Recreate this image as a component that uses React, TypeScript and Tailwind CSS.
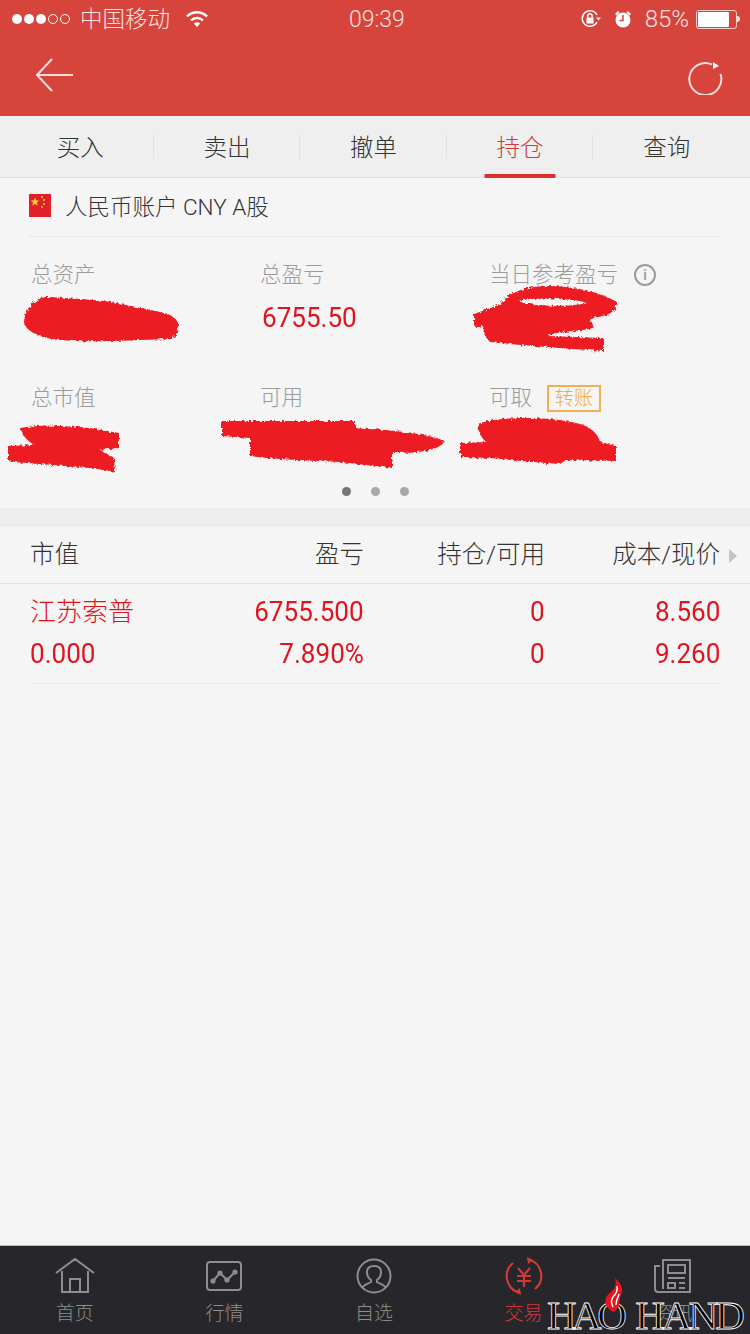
const cjk = "font-['Roboto','Noto_Sans_CJK_SC',sans-serif]";

const tabs = ["买入", "卖出", "撤单", "持仓", "查询"];

function StatusBar() {
  return (
    <div className="relative flex h-[38px] items-center pl-3 pr-[10px] text-[23px] font-light text-[#f8e3e1]">
      <div className="flex items-center gap-[2px]">
        {[0, 1, 2].map((i) => (
          <span key={i} className="size-[10px] rounded-full bg-white" />
        ))}
        {[0, 1].map((i) => (
          <span key={i} className="size-[10px] rounded-full border border-white" />
        ))}
      </div>
      <span className="ml-[10px] text-[22.500px] leading-none">中国移动</span>
      <svg className="ml-[15px]" width="24" height="18" viewBox="0 0 24 18" fill="none" stroke="#fff" strokeWidth="2.4">
        <path d="M2 6.500a14 14 0 0 1 20 0" />
        <path d="M6 10.500a8.500 8.500 0 0 1 12 0" />
        <path d="M12 17l-3.200-3.400a4.600 4.600 0 0 1 6.400 0z" fill="#fff" stroke="none" />
      </svg>
      <span className="absolute left-[349px] leading-none">09:39</span>
      <div className="ml-auto flex items-center">
        <svg width="20" height="20" viewBox="0 0 20 20" fill="none" stroke="#fff" strokeWidth="1.500">
          <path d="M16 13A7.800 7.800 0 1 1 16 6" />
          <rect x="5.500" y="8.500" width="7" height="6" fill="#fff" stroke="none" />
          <path d="M6.800 8.500V7a2.200 2.200 0 0 1 4.400 0v1.500" />
          <path d="M15 8.500h5l-2.500 3z" fill="#fff" stroke="none" />
        </svg>
        <svg className="ml-[12px]" width="20" height="20" viewBox="0 0 20 20" fill="#fff">
          <circle cx="10" cy="11" r="7.500" />
          <path d="M2 5l3-3 1.500 1.500-3 3zM18 5l-3-3-1.500 1.500 3 3z" />
          <path d="M10 6v5.500H6.500" stroke="#d6443c" strokeWidth="1.500" fill="none" />
        </svg>
        <span className="ml-[12px] text-[24px] leading-none">85%</span>
        <div className="ml-[7px] flex items-center">
          <div className="h-[19px] w-[41px] rounded-[3px] border border-[#f6cfcb] p-[1px]">
            <div className="h-full w-[85%] rounded-[1px] bg-white" />
          </div>
          <span className="h-[6px] w-[3px] rounded-r-sm bg-[#f6dedb]" />
        </div>
      </div>
    </div>
  );
}

function Stat({ label, children }: { label: string; children?: React.ReactNode }) {
  return (
    <div className="h-[123px] pt-[26px]">
      <div className="flex h-[24px] items-center text-[21.500px] font-light leading-none text-[#9b9b9b]">
        {label}
        {children}
      </div>
    </div>
  );
}

function Num({ value, className }: { value: string; className: string }) {
  return (
    <span className={`${className} text-right`}>
      <span className="inline-block origin-right scale-x-[.93] text-[28px]">{value}</span>
    </span>
  );
}

function NavItem({ label, active, children }: { label: string; active?: boolean; children: React.ReactNode }) {
  return (
    <div className={`flex flex-1 flex-col items-center pt-[10px] ${active ? "text-[#cf3a38]" : "text-[#8e8e8e]"}`}>
      <div className="flex h-[40px] items-center">{children}</div>
      <span className="mt-[6px] text-[19px] font-light leading-[24px]">{label}</span>
    </div>
  );
}

export default function App() {
  return (
    <div className={`relative flex h-[1334px] w-[750px] flex-col overflow-hidden bg-[#f5f5f5] ${cjk}`}>
      <header className="h-[116px] shrink-0 bg-[#d6443c]">
        <StatusBar />
        <div className="flex items-start justify-between pl-[35px] pr-[27px] pt-[19px]">
          <svg width="38" height="36" viewBox="0 0 38 36" fill="none" stroke="#f6dedb" strokeWidth="2">
            <path d="M17 2L2 18l15 16M2 18h36" />
          </svg>
          <svg width="36" height="38" viewBox="0 0 36 38" fill="none" stroke="#f6dedb" strokeWidth="2">
            <path d="M25 7.500A16 16 0 1 0 33.500 17" />
            <path d="M26 5l6 4-6 3z" fill="#fff" stroke="none" />
          </svg>
        </div>
      </header>

      <nav className="flex h-[62px] shrink-0 border-b border-[#e2e2e2] bg-[#efefef] pl-[7px] pr-[10px]">
        {tabs.map((tab, i) => (
          <div key={tab} className="relative flex flex-1 items-center justify-center">
            <span className={`pt-[5px] text-[23.500px] font-light ${i === 3 ? "text-[#cf3a38]" : "text-[#333]"}`}>{tab}</span>
            {i < 4 && <span className="absolute right-0 top-[19px] h-[24px] w-px bg-[#e2e2e2]" />}
            {i === 3 && <span className="absolute bottom-[-1px] left-1/2 h-[4px] w-[71px] -translate-x-1/2 bg-[#d8322f]" />}
          </div>
        ))}
      </nav>

      <div className="mx-[29px] flex h-[59px] shrink-0 items-center border-b border-[#e8e8e8]">
        <svg width="22" height="23" viewBox="0 0 22 23" className="mb-[4px]">
          <rect width="22" height="23" fill="#e2202a" />
          <path d="M6 3.500l1.200 3h3l-2.400 2 1 3.200L6 9.800l-2.800 1.900 1-3.200L1.800 6.500h3z" fill="#f8d62c" />
          <circle cx="13" cy="3" r="1" fill="#f8d62c" />
          <circle cx="15" cy="6" r="1" fill="#f8d62c" />
          <circle cx="15" cy="10" r="1" fill="#f8d62c" />
          <circle cx="13" cy="13" r="1" fill="#f8d62c" />
        </svg>
        <span className="ml-[14px] pt-[1px] text-[22.500px] font-light text-[#333]">人民币账户 CNY A股</span>
      </div>

      <section className="relative h-[271px] shrink-0">
        <div className="grid grid-cols-[229px_229px_1fr] pl-[31px]">
          <Stat label="总资产" />
          <Stat label="总盈亏" />
          <Stat label="当日参考盈亏">
            <span className="ml-[16px] flex size-[22px] items-center justify-center rounded-full border-2 border-[#9b9b9b] text-[14px] font-medium">i</span>
          </Stat>
          <Stat label="总市值" />
          <Stat label="可用" />
          <Stat label="可取">
            <span className="ml-[15px] flex h-[27px] w-[54px] items-center justify-center border-2 border-[#f0b04e] text-[19px] font-light text-[#eeaa45]">转账</span>
          </Stat>
        </div>
        <span className="absolute left-[262px] top-[64px] origin-left scale-x-[.93] text-[28px] leading-[34px] text-[#e0141e]">6755.50</span>
        <div className="absolute left-[342px] top-[250px] flex gap-[20px]">
          <span className="size-[9px] rounded-full bg-[#757575]" />
          <span className="size-[9px] rounded-full bg-[#a8a8a8]" />
          <span className="size-[9px] rounded-full bg-[#a8a8a8]" />
        </div>
      </section>

      <div className="h-[19px] shrink-0 bg-[#eeeeee]" />

      <div className="relative flex h-[57px] shrink-0 items-center border-b border-[#e2e2e2] px-[30px] pt-[1px] text-[24.500px] font-light text-[#333]">
        <span className="w-[120px]">市值</span>
        <span className="w-[214px] text-right">盈亏</span>
        <span className="w-[181px] text-right">持仓/可用</span>
        <span className="w-[175px] text-right">成本/现价</span>
        <svg className="absolute right-[13px]" width="8" height="14" viewBox="0 0 8 14"><path d="M0 0l8 7-8 7z" fill="#c4c4c4" /></svg>
      </div>

      <div className="mx-[30px] h-[100px] shrink-0 border-b border-[#e8e8e8] pt-[7px] text-[26px] leading-[42px] text-[#e0141e]">
        <div className="flex">
          <span className="w-[120px] font-light">江苏索普</span>
          <Num value="6755.500" className="w-[214px]" />
          <Num value="0" className="w-[181px]" />
          <Num value="8.560" className="w-[175px]" />
        </div>
        <div className="flex">
          <span className="w-[120px]"><span className="inline-block origin-left scale-x-[.93] text-[28px]">0.000</span></span>
          <Num value="7.890%" className="w-[214px]" />
          <Num value="0" className="w-[181px]" />
          <Num value="9.260" className="w-[175px]" />
        </div>
      </div>

      <div className="flex-1" />

      <footer className="flex h-[89px] shrink-0 border-t border-[#bdbdbd] bg-[#26262b] pr-[2px]">
        <NavItem label="首页">
          <svg width="40" height="36" viewBox="0 0 40 36" fill="none" stroke="currentColor" strokeWidth="2">
            <path d="M1 15L20 1l19 14M7 13v21h26V13M15 34V21h10v13" />
          </svg>
        </NavItem>
        <NavItem label="行情">
          <svg width="36" height="30" viewBox="0 0 36 30" fill="none" stroke="currentColor" strokeWidth="2">
            <rect x="1" y="1" width="34" height="28" rx="3" />
            <path d="M7 20l7-8 7 7 8-8" />
            <circle cx="7" cy="20" r="1.600" fill="currentColor" /><circle cx="14" cy="12" r="1.600" fill="currentColor" /><circle cx="21" cy="19" r="1.600" fill="currentColor" /><circle cx="29" cy="11" r="1.600" fill="currentColor" />
          </svg>
        </NavItem>
        <NavItem label="自选">
          <svg width="36" height="36" viewBox="0 0 36 36" fill="none" stroke="currentColor" strokeWidth="2">
            <circle cx="18" cy="18" r="16.500" />
            <path d="M6 30c2-4 6-4 9-6v-2c-3-2-4-5-4-8 0-4 3-6 7-6s7 2 7 6c0 3-1 6-4 8v2c3 2 7 2 9 6" />
          </svg>
        </NavItem>
        <NavItem label="交易" active>
          <svg width="38" height="38" viewBox="0 0 38 38" fill="none" stroke="currentColor" strokeWidth="2.200">
            <path d="M24 2.500A17 17 0 0 1 30 32M14 35.500A17 17 0 0 1 8 6" />
            <path d="M22 0l6 3-5 4zM16 38l-6-3 5-4z" fill="currentColor" stroke="none" />
            <path d="M13 11l6 7 6-7M12 19h14M12 24h14M19 18v12" />
          </svg>
        </NavItem>
        <NavItem label="资讯">
          <svg width="38" height="34" viewBox="0 0 38 34" fill="none" stroke="currentColor" strokeWidth="2">
            <path d="M6 7H1v23c0 2 1 3 3 3h32V1H9v29" />
            <path d="M14 6h17v8H14zM14 19h17M14 24h7v5h-7zM25 24h6M25 29h6" />
          </svg>
        </NavItem>
      </footer>

      {/* red marker scribbles over the account figures, page coordinates */}
      <svg className="pointer-events-none absolute left-0 top-0" width="750" height="510" viewBox="0 0 750 510">
        <defs>
          <filter id="rough" x="-5%" y="-10%" width="110%" height="120%">
            <feTurbulence type="fractalNoise" baseFrequency="0.35" numOctaves="2" seed="4" />
            <feDisplacementMap in="SourceGraphic" scale="5" />
          </filter>
        </defs>
        <g fill="#ec1c24" fillRule="evenodd" filter="url(#rough)">
          <path d="M24 322C26 306 36 296 50 297C80 299 110 300 130 306C150 310 172 312 178 322C178 332 176 338 170 339C130 340 90 343 60 340C40 338 26 332 24 322z" />
          <path d="M474 314C490 308 498 306 502 302C510 292 525 287 545 286C575 286 600 292 617 302C616 312 610 316 590 318L593 328C580 332 560 330 548 336L603 338V351C570 349 530 346 490 342C484 336 484 330 483 326L474 327zM518 301C535 307 570 307 587 303C575 298 530 297 518 301z" />
          <path d="M20 428C40 424 70 426 90 428L119 433V448L100 450L114 458L115 472C90 466 50 466 8 461V446L34 445C26 440 22 434 20 428z" />
          <path d="M222 421H355V428C385 430 425 432 445 441C438 450 425 453 392 453V468L340 462C310 460 280 460 250 456V438L222 436z" />
          <path d="M478 424C500 416 550 416 580 424C592 428 598 434 600 442L616 446V461L566 460L560 464C535 462 510 460 490 458L460 457V443L486 442C480 436 478 430 478 424z" />
        </g>
      </svg>

      <div className="absolute left-[547px] top-[1298px] flex h-[34px] items-center gap-[13px] font-['Liberation_Serif',serif] text-[41px] leading-[34px] text-black [-webkit-text-stroke:0.8px_#fff]">
        <span className="tracking-[-4.500px]">HAO</span>
        <span className="tracking-[-3px]">HAND</span>
      </div>
      <svg className="absolute left-[604px] top-[1277px]" width="20" height="36" viewBox="0 0 20 36">
        <path d="M11 1c6 5 9 11 6 17-2 4-1 7-2 10-1 3-3 6-6 7C4 32 0 27 2 21c2-5 7-7 9-11 1-3 1-6 0-9z" fill="#e8141c" />
        <path d="M13 9c1 5-1 8-4 11-2 3-2 6 0 10M15 17c-1 4-3 6-3 11" fill="none" stroke="#fff" strokeWidth="1.500" />
      </svg>
    </div>
  );
}
